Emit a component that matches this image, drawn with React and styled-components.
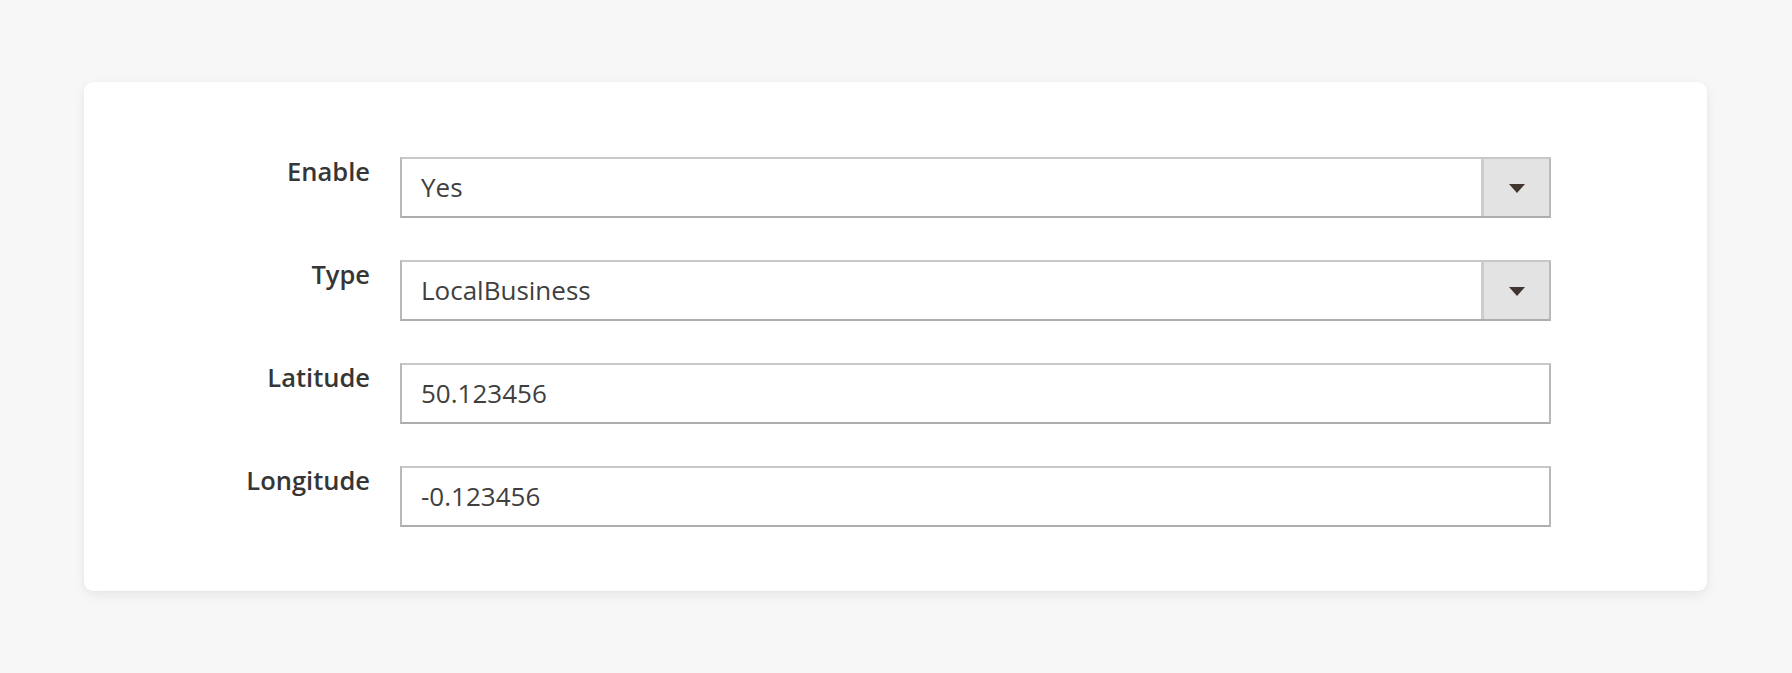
import React from "react";
import styled, { createGlobalStyle } from "styled-components";

const Global = createGlobalStyle`
  html, body { margin: 0; padding: 0; background: #f7f7f7; }
  body { font-family: "Open Sans", "Noto Sans", sans-serif; }
  * { box-sizing: border-box; }
`;

const Page = styled.div`
  width: 1792px;
  height: 673px;
  padding: 82px 85px 0 84px;
`;

const Card = styled.section`
  background: #fff;
  border-radius: 9px;
  box-shadow: 0 4px 12px rgba(0, 0, 0, 0.07), 0 0 2px rgba(0, 0, 0, 0.04);
  padding: 75px 156px 64px 0;
  display: grid;
  grid-template-columns: 286px 1fr;
  column-gap: 30px;
  row-gap: 42px;
`;

const Label = styled.label`
  justify-self: end;
  align-self: start;
  padding-top: 1px;
  font-size: 25.5px;
  line-height: 26px;
  font-weight: 600;
  color: #363636;
`;

const Field = styled.div`
  height: 61px;
  display: flex;
  align-items: stretch;
  border: 2px solid #b9b9b9;
  border-top-color: #c8c8c8;
  border-bottom-color: #adadad;
  background: #fff;
`;

const Value = styled.div`
  flex: 1;
  display: flex;
  align-items: center;
  padding-left: 19px;
  padding-bottom: 2px;
  font-size: 26px;
  color: #3f3f3f;
`;

const Toggle = styled.div`
  width: 68px;
  background: #e3e3e3;
  border-left: 3px solid #cdcdcd;
  display: flex;
  align-items: center;
  justify-content: center;
`;

const Arrow = styled.span`
  width: 0;
  height: 0;
  border-left: 8px solid transparent;
  border-right: 8px solid transparent;
  border-top: 9px solid #41362f;
  margin-top: 2px;
`;

const rows = [
  { label: "Enable", value: "Yes", select: true },
  { label: "Type", value: "LocalBusiness", select: true },
  { label: "Latitude", value: "50.123456" },
  { label: "Longitude", value: "-0.123456" },
];

export default function App() {
  return (
    <>
      <Global />
      <Page>
        <Card>
          {rows.map((r) => (
            <React.Fragment key={r.label}>
              <Label>{r.label}</Label>
              <Field>
                <Value>{r.value}</Value>
                {r.select && (
                  <Toggle>
                    <Arrow />
                  </Toggle>
                )}
              </Field>
            </React.Fragment>
          ))}
        </Card>
      </Page>
    </>
  );
}
